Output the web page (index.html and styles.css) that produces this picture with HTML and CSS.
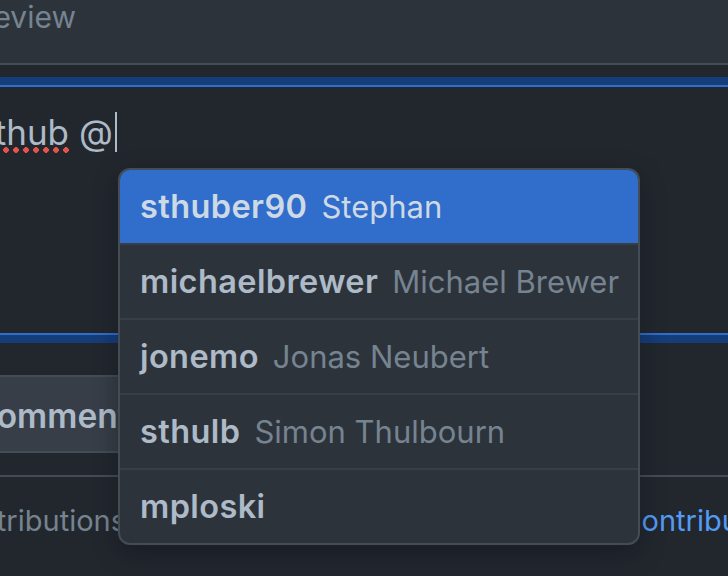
FILE: index.html
```html
<!DOCTYPE html>
<html lang="en">
<head>
<meta charset="utf-8">
<title>Mention suggestions</title>
<link rel="stylesheet" href="styles.css">
</head>
<body>
<div class="page">
  <div class="tabs">
    <div class="tab-slot"><span class="tab">Preview</span></div>
  </div>
  <div class="editor">
    <div class="textarea">
      <span class="line"><span class="spell">@github</span> @<span class="caret"></span></span>
    </div>
  </div>
  <div class="actions">
    <button class="btn" type="button">Comment</button>
  </div>
  <div class="footer">
    <span class="note-left">Remember, contributions</span><span class="note-mid"> to this repository should follow its </span><a class="link" href="#">contributing guidelines</a>
  </div>
</div>
<ul class="suggester">
  <li class="item selected"><span class="login">sthuber90</span><span class="name">Stephan</span></li>
  <li class="item"><span class="login">michaelbrewer</span><span class="name">Michael Brewer</span></li>
  <li class="item"><span class="login">jonemo</span><span class="name">Jonas Neubert</span></li>
  <li class="item"><span class="login">sthulb</span><span class="name">Simon Thulbourn</span></li>
  <li class="item"><span class="login">mploski</span></li>
</ul>
</body>
</html>
```
FILE: styles.css
```css
* { box-sizing: border-box; }
html, body { margin: 0; padding: 0; }
body {
  width: 728px;
  height: 576px;
  overflow: hidden;
  background: #22272e;
  font-family: Inter, "Liberation Sans", sans-serif;
  color: #adbac7;
  position: relative;
}
.page { width: 728px; }

.tabs {
  height: 65px;
  background: #2d333b;
  border-bottom: 2px solid #444c56;
  display: flex;
}
.tab-slot {
  width: 76px;
  display: flex;
  justify-content: flex-end;
  white-space: nowrap;
}
.tab {
  font-size: 30px;
  line-height: 36px;
  color: #768390;
  margin-top: -1px;
}

.editor { padding-top: 20px; }
.textarea {
  margin: 0 -40px 0 -40px;
  height: 250px;
  border: 2px solid #316dca;
  box-shadow: 0 0 0 8px #153d7a;
  background: #22272e;
  padding: 25px 0 0 0;
  display: flex;
}
.line {
  margin-left: -31px;
  font-size: 35px;
  line-height: 40px;
  color: #adbac7;
  white-space: nowrap;
}
.spell {
  background-image: radial-gradient(circle, #e5534b 2.6px, transparent 3px);
  background-size: 10px 6px;
  background-repeat: repeat-x;
  background-position: 0 100%;
}
.caret {
  display: inline-block;
  width: 2px;
  height: 40px;
  background: #adbac7;
  margin-left: 2px;
  vertical-align: -7px;
}

.actions {
  margin-top: 40px;
  display: flex;
}
.btn {
  margin-left: -40px;
  height: 78px;
  padding: 4px 40px 0 10px;
  border: 2px solid #444c56;
  border-radius: 12px;
  background: #373e47;
  color: #adbac7;
  font-family: inherit;
  font-size: 33.5px;
  font-weight: 600;
  white-space: nowrap;
}

.footer {
  margin-top: 22px;
  border-top: 2px solid #444c56;
  display: flex;
  white-space: nowrap;
  font-size: 29px;
  line-height: 36px;
  padding-top: 26px;
  color: #768390;
}
.note-left {
  width: 126px;
  flex: none;
  display: flex;
  justify-content: flex-end;
}
.note-mid {
  width: 499px;
  overflow: hidden;
  flex: none;
}
.link {
  color: #539bf5;
  text-decoration: none;
}

.suggester {
  position: absolute;
  left: 118px;
  top: 168px;
  width: 522px;
  margin: 0;
  padding: 0;
  list-style: none;
  background: #2d333b;
  border: 2px solid #444c56;
  border-radius: 12px;
  overflow: hidden;
  box-shadow: 0 8px 24px rgba(10, 12, 16, 0.35);
}
.item {
  height: 75px;
  display: flex;
  align-items: center;
  padding: 0 18px 0 20px;
  border-top: 2px solid #373e47;
  white-space: nowrap;
}
.item:first-child { border-top: 0; height: 73px; }
.login {
  font-size: 32.5px;
  font-weight: 600;
  letter-spacing: 0.4px;
  color: #adbac7;
}
.name {
  font-size: 31px;
  margin-left: 14px;
  color: #768390;
}
.selected { background: #316dca; }
.selected .login, .selected .name { color: #cdd9e5; }
```
